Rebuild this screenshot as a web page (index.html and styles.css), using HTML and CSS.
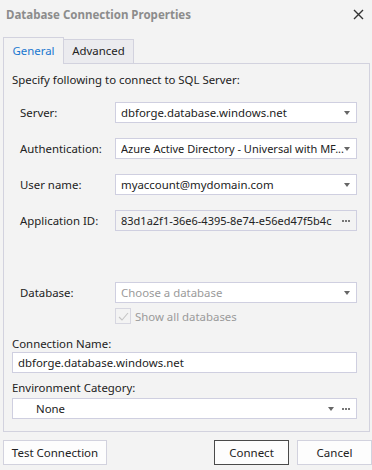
FILE: index.html
```html
<!DOCTYPE html>
<html lang="en">
<head>
    <meta charset="UTF-8">
    <title>Database Connection Properties</title>
    <link rel="stylesheet" href="styles.css">
</head>
<body>
    <div class="dialog">
        <div class="titlebar">
            <span class="title">Database Connection Properties</span>
            <svg class="close" width="11" height="11" viewBox="0 0 11 11"><path d="M1 1L10 10M10 1L1 10" stroke="#333" stroke-width="1.4"/></svg>
        </div>
        <div class="tabs">
            <div class="tab active">General</div>
            <div class="tab">Advanced</div>
        </div>
        <div class="panel">
            <p class="hint">Specify following to connect to SQL Server:</p>
            <div class="row first">
                <label>Server:</label>
                <div class="field"><span class="val">dbforge.database.windows.net</span><i class="arrow"></i></div>
            </div>
            <div class="row">
                <label>Authentication:</label>
                <div class="field"><span class="val tight">Azure Active Directory - Universal with MF...</span><i class="arrow"></i></div>
            </div>
            <div class="row">
                <label>User name:</label>
                <div class="field"><span class="val">myaccount@mydomain.com</span><i class="arrow"></i></div>
            </div>
            <div class="row">
                <label>Application ID:</label>
                <div class="field grey"><span class="val tight">83d1a2f1-36e6-4395-8e74-e56ed47f5b4c</span><svg class="dots" width="8" height="2" viewBox="0 0 8 2"><rect x="0" y="0" width="2" height="2" fill="#777"/><rect x="3" y="0" width="2" height="2" fill="#777"/><rect x="6" y="0" width="2" height="2" fill="#777"/></svg></div>
            </div>
            <div class="row db">
                <label>Database:</label>
                <div class="field"><span class="val muted">Choose a database</span><i class="arrow"></i></div>
            </div>
            <div class="check">
                <span class="box"><svg width="11" height="9" viewBox="0 0 11 9"><path d="M1 5L4 8L10 1" fill="none" stroke="#c4c4c4" stroke-width="1.1"/></svg></span>
                <span class="muted">Show all databases</span>
            </div>
            <div class="caption">Connection Name:</div>
            <div class="field wide"><span class="val">dbforge.database.windows.net</span></div>
            <div class="caption env">Environment Category:</div>
            <div class="field wide"><span class="val indent">None</span><i class="arrow"></i><svg class="dots" width="8" height="2" viewBox="0 0 8 2"><rect x="0" y="0" width="2" height="2" fill="#777"/><rect x="3" y="0" width="2" height="2" fill="#777"/><rect x="6" y="0" width="2" height="2" fill="#777"/></svg></div>
        </div>
        <div class="buttons">
            <button class="btn test">Test Connection</button>
            <div class="right">
                <button class="btn default">Connect</button>
                <button class="btn">Cancel</button>
            </div>
        </div>
    </div>
</body>
</html>
```

FILE: styles.css
```css
body, div, p{
    margin: 0;
    padding: 0;
}
body{
    background: #f3f3f3;
    font-family: "Noto Sans", "Open Sans", sans-serif;
    font-size: 11.4px;
    color: #222;
}
.dialog{
    width: 372px;
    height: 470px;
    background: #f3f3f3;
}
.titlebar{
    height: 28px;
    padding: 0 8px 0 6px;
    display: flex;
    align-items: center;
    justify-content: space-between;
}
.title{
    font-weight: bold;
    font-size: 11.5px;
    color: #8c8c8c;
}
.tabs{
    display: flex;
    align-items: flex-end;
    height: 26px;
    margin-top: 9px;
    padding-left: 3px;
}
.tab{
    height: 23px;
    line-height: 22px;
    width: 69px;
    text-align: center;
    border: 1px solid #d2d2de;
    border-bottom: none;
    border-left: none;
    background: #ebebef;
}
.tab.active{
    height: 26px;
    line-height: 26px;
    width: 59px;
    border-left: 1px solid #d2d2de;
    background: #f3f3f3;
    color: #1a78d0;
    position: relative;
    top: 1px;
}
.panel{
    margin: 0 2px 0 3px;
    height: 369px;
    border: 1px solid #d2d2de;
    padding: 8px 12px 0 8px;
    box-sizing: border-box;
}
.hint{
    line-height: 16px;
}
.row{
    display: flex;
    align-items: center;
    height: 21px;
    margin-top: 15px;
    padding-left: 8px;
}
.row.first{
    margin-top: 14px;
}
.row.db{
    margin-top: 51px;
}
.row label{
    width: 95px;
    flex: none;
}
.field{
    width: 242px;
    flex: none;
    height: 21px;
    display: flex;
    align-items: center;
    border: 1px solid #cfcfe0;
    background: #fff;
    box-sizing: border-box;
    padding: 0 6px 0 5px;
}
.field.grey{
    background: #f3f3f3;
}
.field .val{
    flex: 1;
    white-space: nowrap;
    overflow: hidden;
}
.field .val.tight{
    font-size: 11px;
}
.muted{
    color: #9a9a9a;
}
.arrow{
    width: 0;
    height: 0;
    border-left: 3.5px solid transparent;
    border-right: 3.5px solid transparent;
    border-top: 4px solid #666;
}
.dots{
    margin-left: 8px;
    flex: none;
}
.check{
    display: flex;
    align-items: center;
    gap: 4px;
    margin: 5px 0 0 103px;
    height: 16px;
}
.box{
    width: 14px;
    height: 14px;
    border: 1px solid #d6d6e0;
    display: flex;
    align-items: center;
    justify-content: center;
}
.caption{
    line-height: 16px;
    margin-top: 12px;
}
.caption.env{
    margin-top: 7px;
    margin-bottom: 2px;
}
.field.wide{
    width: auto;
}
.indent{
    padding-left: 18px;
}
.buttons{
    display: flex;
    justify-content: space-between;
    margin-top: 8px;
    padding-left: 3px;
}
.right{
    display: flex;
    gap: 8px;
}
.btn{
    height: 25px;
    width: 75px;
    border: 1px solid #d2d2de;
    background: #fdfdfd;
    font-family: inherit;
    font-size: 11.5px;
    color: #222;
    padding: 0;
}
.btn.test{
    width: 104px;
}
.btn.default{
    border-color: #4a4a4a;
}
```
